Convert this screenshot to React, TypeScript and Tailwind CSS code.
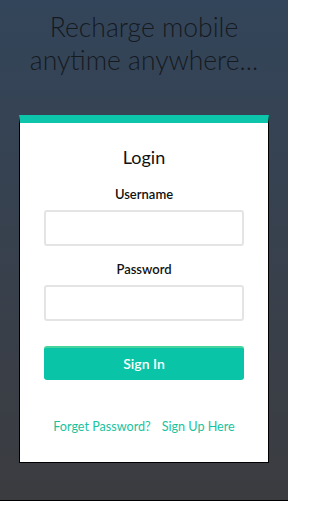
import React from "react";

export default function App() {
  return (
    <div className="w-[288px] h-[512px] bg-white overflow-hidden" style={{ fontFamily: "Lato, 'Open Sans', sans-serif" }}>
      <div className="h-[501px] border-b border-black bg-gradient-to-b from-[#33455a] to-[#3b3c40] flex flex-col items-center pt-[11px]">
        <h1 className="text-[26.5px] leading-[33px] font-light text-[#151a21] text-center">
          Recharge mobile
          <br />
          anytime anywhere...
        </h1>
        <div className="mt-[38px] w-[250px] bg-white border-t-[8px] border-t-[#0cc5aa] border-x border-b border-x-black border-b-black flex flex-col items-center pt-[22px] pb-[26px]">
          <div className="text-[18px] leading-[24px] text-[#111]">Login</div>
          <label className="mt-[16px] text-[13px] leading-[18px] font-semibold text-[#111]">Username</label>
          <input className="mt-[7px] w-[200px] h-[36px] border-2 border-[#e4e4e4] rounded-[3px] outline-none" />
          <label className="mt-[14px] text-[13px] leading-[18px] font-semibold text-[#111]">Password</label>
          <input type="password" className="mt-[7px] w-[200px] h-[36px] border-2 border-[#e4e4e4] rounded-[3px] outline-none" />
          <button className="mt-[25px] w-[200px] h-[34px] bg-[#0ac4a8] border-t-2 border-[#45d49c] rounded-[3px] text-white text-[14px] font-semibold leading-[18px]">
            Sign In
          </button>
          <div className="mt-[38px] flex gap-[11px] text-[12.6px] leading-[18px] text-[#17c3a0]">
            <span>Forget Password?</span>
            <span>Sign Up Here</span>
          </div>
        </div>
      </div>
    </div>
  );
}
